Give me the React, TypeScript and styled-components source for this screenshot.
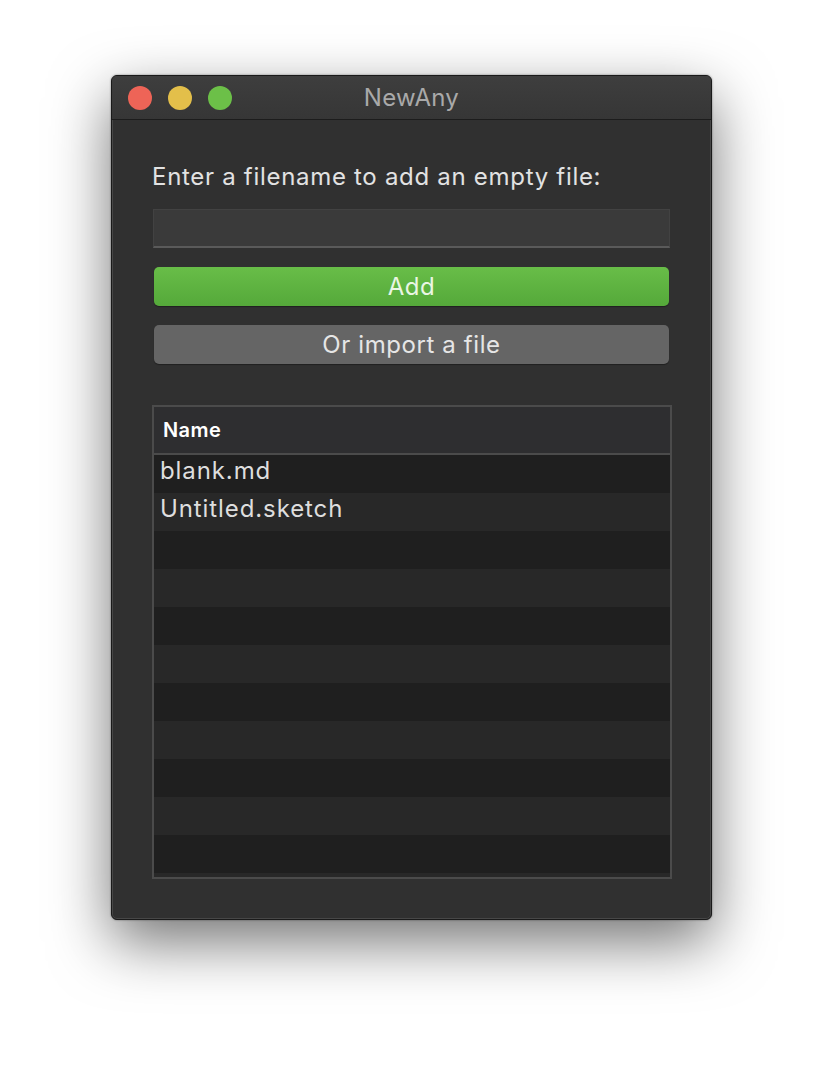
import React from "react";
import styled, { createGlobalStyle } from "styled-components";

const Global = createGlobalStyle`
  html, body { margin: 0; padding: 0; background: #ffffff; }
  body { font-family: Inter, "Noto Sans", "Liberation Sans", sans-serif; }
`;

const Page = styled.div`
  width: 824px;
  height: 1068px;
  box-sizing: border-box;
  padding: 75px 0 0 111px;
`;

const Window = styled.div`
  width: 601px;
  height: 845px;
  box-sizing: border-box;
  border-radius: 6px;
  background: #303030;
  border: 1px solid #1a1a1a;
  box-shadow: inset 0 0 0 1px #474747, 0 22px 60px rgba(0, 0, 0, 0.55), 0 0 2px rgba(0,0,0,0.5);
  display: flex;
  flex-direction: column;
  overflow: hidden;
`;

const TitleBar = styled.div`
  height: 43px;
  flex: none;
  display: flex;
  align-items: center;
  position: relative;
  background: linear-gradient(#3e3e3e, #363636);
  border-bottom: 1px solid #1c1c1c;
  padding-left: 16px;
  gap: 16px;
`;

const Light = styled.span<{ $c: string }>`
  width: 24px;
  height: 24px;
  border-radius: 50%;
  background: ${(p) => p.$c};
`;

const Title = styled.div`
  position: absolute;
  left: 0;
  right: 0;
  top: 0;
  bottom: 0;
  display: flex;
  align-items: center;
  justify-content: center;
  color: #a9a9a9;
  font-size: 24px;
  letter-spacing: 0.3px;
  pointer-events: none;
`;

const Content = styled.div`
  padding: 42px 41px 0 41px;
  display: flex;
  flex-direction: column;
`;

const Label = styled.div`
  color: #e2e2e2;
  font-size: 24px;
  letter-spacing: 0.7px;
  line-height: 30px;
  height: 30px;
  margin-top: 0;
  margin-left: -1px;
  margin-bottom: 17px;
`;

const Input = styled.div`
  height: 39px;
  box-sizing: border-box;
  background: #3a3a3a;
  border: 1px solid #424242;
  border-bottom: 2px solid #5a5a5a;
  margin-bottom: 19px;
`;

const Button = styled.div<{ $green?: boolean }>`
  height: 39px;
  box-sizing: border-box;
  border-radius: 5px;
  margin: 0 1px 19px 1px;
  display: flex;
  align-items: center;
  justify-content: center;
  font-size: 24px;
  letter-spacing: 0.6px;
  color: ${(p) => (p.$green ? "#eaf6e4" : "#e6e6e6")};
  background: ${(p) =>
    p.$green ? "linear-gradient(#68bd48, #55a93a)" : "#656565"};
  box-shadow: 0 1px 1px rgba(0, 0, 0, 0.35);
`;

const Table = styled.div`
  margin: 22px -2px 0 -1px;
  height: 474px;
  box-sizing: border-box;
  border: 2px solid #4b4b4b;
  display: flex;
  flex-direction: column;
  overflow: hidden;
`;

const Header = styled.div`
  height: 48px;
  flex: none;
  box-sizing: border-box;
  background: #2e2e30;
  border-bottom: 2px solid #4b4b4b;
  display: flex;
  align-items: center;
  padding-left: 9px;
  color: #ffffff;
  font-size: 20px;
  letter-spacing: 0.4px;
  font-weight: 600;
`;

const Row = styled.div<{ $odd: boolean }>`
  height: 38px;
  flex: none;
  box-sizing: border-box;
  background: ${(p) => (p.$odd ? "#282828" : "#1f1f1f")};
  color: #dedede;
  font-size: 24px;
  letter-spacing: 0.9px;
  line-height: 30px;
  padding: 1px 0 0 6px;
`;

const files = ["blank.md", "Untitled.sketch"];

export default function App() {
  const rows = Array.from({ length: 12 }, (_, i) => files[i] ?? "");
  return (
    <Page>
      <Global />
      <Window>
        <TitleBar>
          <Light $c="#ee6457" />
          <Light $c="#e3bf4a" />
          <Light $c="#6cc048" />
          <Title>NewAny</Title>
        </TitleBar>
        <Content>
          <Label>Enter a filename to add an empty file:</Label>
          <Input />
          <Button $green>Add</Button>
          <Button>Or import a file</Button>
          <Table>
            <Header>Name</Header>
            {rows.map((r, i) => (
              <Row key={i} $odd={i % 2 === 1}>
                {r}
              </Row>
            ))}
          </Table>
        </Content>
      </Window>
    </Page>
  );
}
